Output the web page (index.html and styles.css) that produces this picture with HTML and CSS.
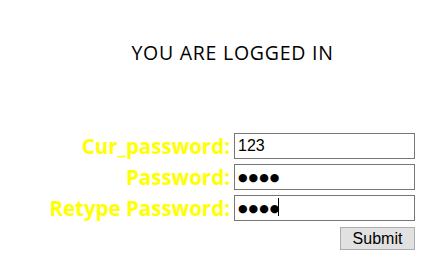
FILE: index.html
```html
<!DOCTYPE html>
<html>
<head>
<meta charset="utf-8">
<link rel="stylesheet" href="styles.css">
</head>
<body>
<h1 class="title">YOU ARE LOGGED IN</h1>
<form class="form">
  <label class="label" for="cur">Cur_password:</label>
  <input class="field" id="cur" type="text" value="123">
  <label class="label" for="pw">Password:</label>
  <input class="field masked" id="pw" type="text" value="●●●●">
  <label class="label" for="rpw">Retype Password:</label>
  <span class="field-wrap">
    <input class="field masked" id="rpw" type="text" value="●●●●">
    <span class="caret"></span>
  </span>
  <div class="actions"><button class="submit" type="button">Submit</button></div>
</form>
</body>
</html>
```
FILE: styles.css
```css
html, body {
  margin: 0;
  padding: 0;
  background: #ffffff;
}
body {
  width: 448px;
  height: 270px;
  overflow: hidden;
  font-family: "Open Sans", "Noto Sans", sans-serif;
}
.title {
  margin: 0;
  padding-top: 40px;
  padding-left: 17px;
  height: 133px;
  box-sizing: border-box;
  text-align: center;
  font-size: 19.5px;
  line-height: 26px;
  font-weight: normal;
  color: #000000;
  letter-spacing: 0.75px;
}
.form {
  display: grid;
  grid-template-columns: 183px 181px;
  column-gap: 4px;
  row-gap: 5px;
  margin-left: 47px;
  align-items: center;
}
.label {
  text-align: right;
  color: #ffff00;
  font-weight: bold;
  font-size: 20.5px;
  line-height: 26px;
  white-space: nowrap;
}
.field-wrap {
  position: relative;
  display: block;
  height: 26px;
}
.field {
  display: block;
  box-sizing: border-box;
  width: 181px;
  height: 26px;
  margin: 0;
  padding: 0 3px;
  border: 1px solid #767676;
  font-family: "Liberation Sans", sans-serif;
  font-size: 16px;
  color: #000;
  background: #fff;
  outline: none;
}
.masked {
  font-family: "DejaVu Sans", sans-serif;
  font-size: 11px;
  letter-spacing: 1px;
}
.caret {
  position: absolute;
  left: 44px;
  top: 3px;
  width: 1px;
  height: 18px;
  background: #000;
}
.actions {
  grid-column: 2;
  display: flex;
  justify-content: flex-end;
  margin-top: 1px;
}
.submit {
  box-sizing: border-box;
  width: 75px;
  height: 23px;
  margin: 0;
  padding: 0;
  border: 1px solid #adadad;
  background: #e1e1e1;
  font-family: "Liberation Sans", sans-serif;
  font-size: 16px;
  color: #000;
}
```
